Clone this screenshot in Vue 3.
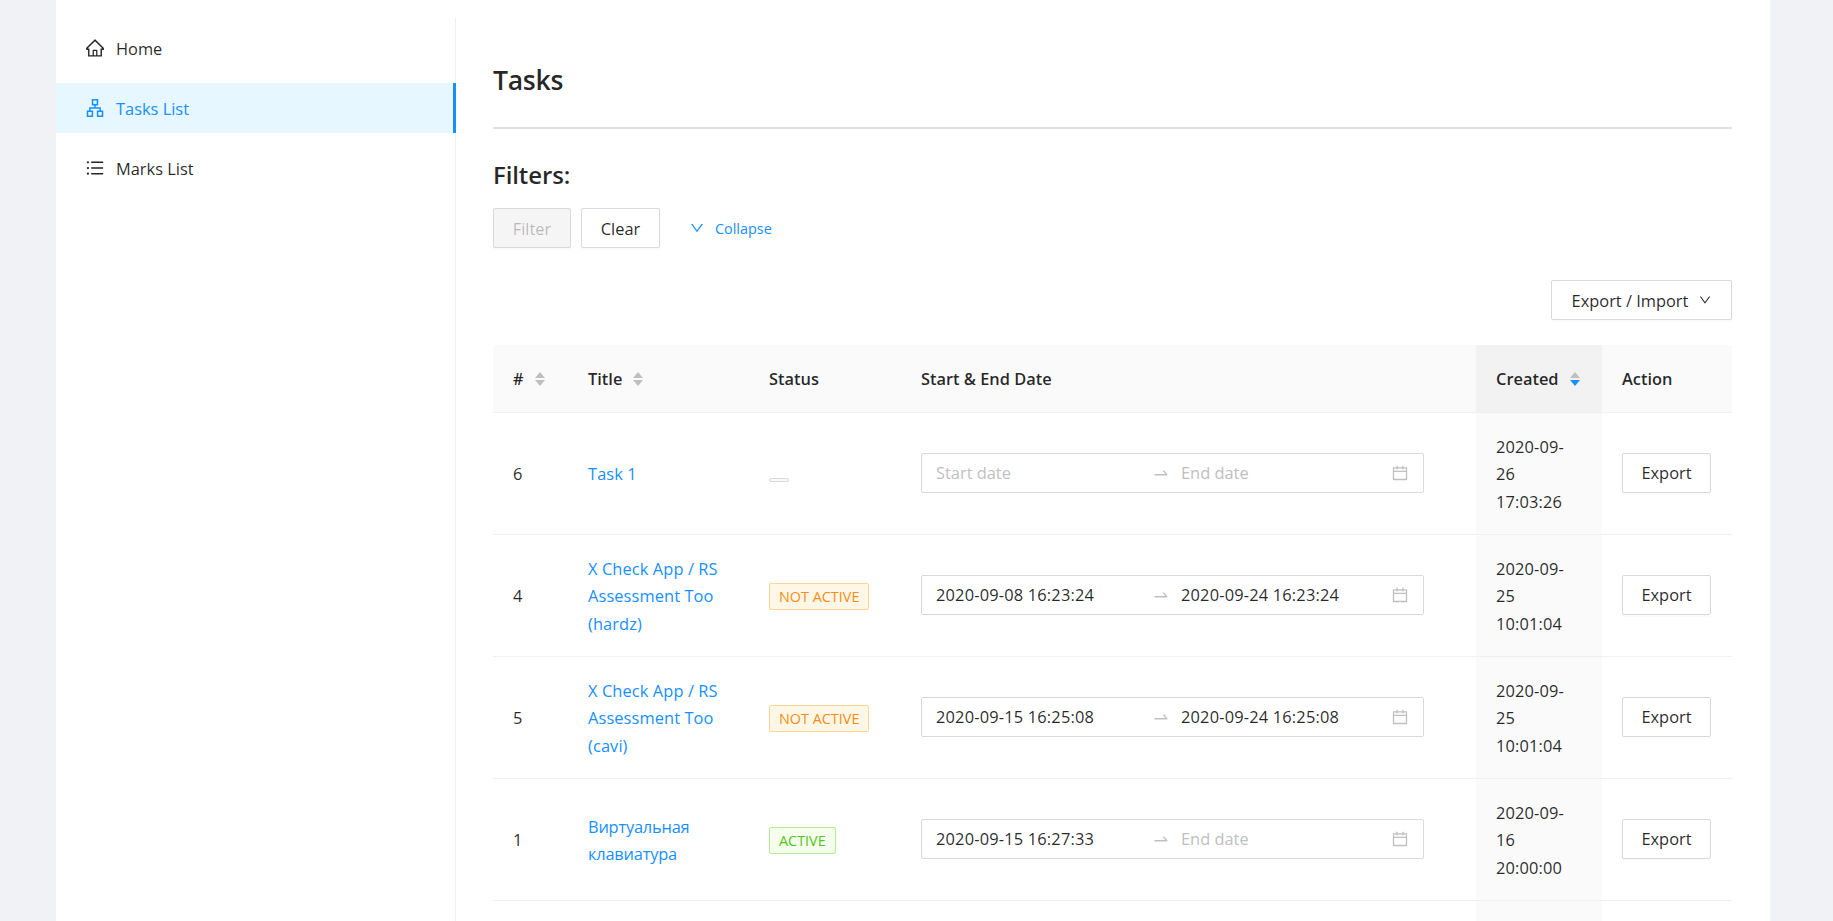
<script setup>
const paths = {
  down: 'M884 256h-75c-5.1 0-9.9 2.5-12.9 6.6L512 654.2 227.9 262.6c-3-4.1-7.8-6.6-12.9-6.6h-75c-6.5 0-10.3 7.4-6.5 12.7l352.6 486.1c12.8 17.6 39 17.6 51.7 0l352.6-486.1c3.9-5.3.1-12.7-6.4-12.7z',
  swap: 'M873.1 596.2l-164-208A32 32 0 0 0 684 376h-64.8c-6.7 0-10.4 7.7-6.3 13l144.3 183H152c-4.4 0-8 3.6-8 8v60c0 4.4 3.6 8 8 8h695.9c26.8 0 41.7-30.8 25.2-51.8z',
  cal: 'M880 184H712v-64c0-4.4-3.6-8-8-8h-56c-4.4 0-8 3.6-8 8v64H384v-64c0-4.4-3.6-8-8-8h-56c-4.4 0-8 3.6-8 8v64H144c-17.7 0-32 14.3-32 32v664c0 17.7 14.3 32 32 32h736c17.7 0 32-14.3 32-32V216c0-17.7-14.3-32-32-32zm-40 656H184V460h656v380zM184 392V256h128v48c0 4.4 3.6 8 8 8h56c4.4 0 8-3.6 8-8v-48h256v48c0 4.4 3.6 8 8 8h56c4.4 0 8-3.6 8-8v-48h128v136H184z'
}
const menu = [
  { label: 'Home', d: 'M946.5 505L560.1 118.8l-25.9-25.9a31.5 31.5 0 0 0-44.4 0L77.5 505a63.9 63.9 0 0 0-18.8 46c.4 35.2 29.7 63.3 64.9 63.3h42.5V940h691.8V614.3h43.4c17.1 0 33.2-6.7 45.3-18.8a63.6 63.6 0 0 0 18.7-45.3c0-17-6.7-33.1-18.8-45.2zM568 868H456V664h112v204zm217.9-325.7V868H632V640c0-22.1-17.9-40-40-40H432c-22.1 0-40 17.9-40 40v228H238.1V542.3h-96l370-369.7 23.1 23.1L882 542.3h-96.1z' },
  { label: 'Tasks List', active: true, d: 'M908 640H804V488c0-4.4-3.6-8-8-8H548v-96h108c8.8 0 16-7.2 16-16V80c0-8.8-7.2-16-16-16H368c-8.8 0-16 7.2-16 16v288c0 8.8 7.2 16 16 16h108v96H228c-4.4 0-8 3.6-8 8v152H116c-8.8 0-16 7.2-16 16v288c0 8.8 7.2 16 16 16h288c8.8 0 16-7.2 16-16V656c0-8.8-7.2-16-16-16H292v-88h440v88H620c-8.8 0-16 7.2-16 16v288c0 8.8 7.2 16 16 16h288c8.8 0 16-7.2 16-16V656c0-8.8-7.2-16-16-16zm-564 76v168H176V716h168zm84-408V140h168v168H428zm420 576H680V716h168v168z' },
  { label: 'Marks List', d: 'M912 192H328c-4.4 0-8 3.6-8 8v56c0 4.4 3.6 8 8 8h584c4.4 0 8-3.6 8-8v-56c0-4.4-3.6-8-8-8zm0 284H328c-4.4 0-8 3.6-8 8v56c0 4.4 3.6 8 8 8h584c4.4 0 8-3.6 8-8v-56c0-4.4-3.6-8-8-8zm0 284H328c-4.4 0-8 3.6-8 8v56c0 4.4 3.6 8 8 8h584c4.4 0 8-3.6 8-8v-56c0-4.4-3.6-8-8-8zM104 228a56 56 0 1 0 112 0 56 56 0 1 0-112 0zm0 284a56 56 0 1 0 112 0 56 56 0 1 0-112 0zm0 284a56 56 0 1 0 112 0 56 56 0 1 0-112 0z' }
]
const rows = [
  { id: 6, title: 'Task 1', status: '', start: '', end: '', created: ['2020-09-', '26', '17:03:26'] },
  { id: 4, title: 'X Check App / RS Assessment Too (hardz)', status: 'NOT ACTIVE', start: '2020-09-08 16:23:24', end: '2020-09-24 16:23:24', created: ['2020-09-', '25', '10:01:04'] },
  { id: 5, title: 'X Check App / RS Assessment Too (cavi)', status: 'NOT ACTIVE', start: '2020-09-15 16:25:08', end: '2020-09-24 16:25:08', created: ['2020-09-', '25', '10:01:04'] },
  { id: 1, title: 'Виртуальная клавиатура', status: 'ACTIVE', start: '2020-09-15 16:27:33', end: '', created: ['2020-09-', '16', '20:00:00'], cyr: true }
]
</script>

<template>
  <div class="page">
    <div class="shell">
      <aside class="side">
        <div v-for="m in menu" :key="m.label" class="item" :class="{ on: m.active }">
          <svg class="ico" viewBox="64 64 896 896" fill="currentColor"><path :d="m.d" /></svg>
          <span>{{ m.label }}</span>
        </div>
      </aside>
      <main class="main">
        <h1 class="title">Tasks</h1>
        <h2 class="sub">Filters:</h2>
        <div class="filters">
          <button class="btn dis">Filter</button>
          <button class="btn">Clear</button>
          <a class="collapse">
            <svg class="chev" viewBox="64 64 896 896" fill="currentColor"><path :d="paths.down" /></svg>
            <span>Collapse</span>
          </a>
        </div>
        <div class="tools">
          <button class="btn export">Export / Import
            <svg class="chev-s" viewBox="64 64 896 896" fill="currentColor"><path :d="paths.down" /></svg>
          </button>
        </div>
        <table class="tbl">
          <colgroup>
            <col class="c1"><col class="c2"><col class="c3"><col class="c4"><col class="c5"><col class="c6">
          </colgroup>
          <thead>
            <tr>
              <th><span class="th-in"># <span class="sort"><i class="up"></i><i class="dn"></i></span></span></th>
              <th><span class="th-in">Title <span class="sort"><i class="up"></i><i class="dn"></i></span></span></th>
              <th>Status</th>
              <th>Start &amp; End Date</th>
              <th class="sorted"><span class="th-in">Created <span class="sort"><i class="up"></i><i class="dn act"></i></span></span></th>
              <th>Action</th>
            </tr>
          </thead>
          <tbody>
            <tr v-for="r in rows" :key="r.id">
              <td>{{ r.id }}</td>
              <td><a class="link" :class="{ cyr: r.cyr }">{{ r.title }}</a></td>
              <td>
                <span v-if="r.status" class="tag" :class="r.status === 'ACTIVE' ? 'green' : 'orange'">{{ r.status }}</span>
                <span v-else class="tag-empty"></span>
              </td>
              <td>
                <div class="picker">
                  <span class="pi-start" :class="{ ph: !r.start }">{{ r.start || 'Start date' }}</span>
                  <svg class="swap" viewBox="64 64 896 896" fill="currentColor"><path :d="paths.swap" /></svg>
                  <span class="pi-end" :class="{ ph: !r.end }">{{ r.end || 'End date' }}</span>
                  <svg class="cal" viewBox="64 64 896 896" fill="currentColor"><path :d="paths.cal" /></svg>
                </div>
              </td>
              <td class="sorted-td"><div v-for="l in r.created" :key="l">{{ l }}</div></td>
              <td><button class="btn small">Export</button></td>
            </tr>
            <tr class="tail">
              <td></td><td></td><td></td><td></td><td class="sorted-td"></td><td></td>
            </tr>
          </tbody>
        </table>
      </main>
    </div>
  </div>
</template>

<style>
html, body { margin: 0; height: 100%; overflow: hidden; background: #f0f2f5; }
</style>

<style scoped>
.page {
  height: 921px;
  overflow: hidden;
  background: #f0f2f5;
  padding: 0 63px 0 56px;
  font-family: "Open Sans", "Noto Sans", sans-serif;
  font-size: 16.4px;
  color: rgba(0, 0, 0, 0.85);
}
.shell { display: flex; height: 100%; background: #fff; padding-top: 18px; box-sizing: border-box; }
.side { width: 400px; flex: none; border-right: 1px solid #f0f0f0; box-sizing: border-box; padding-top: 5px; display: flex; flex-direction: column; gap: 10px; }
.item { height: 50px; width: 400px; display: flex; align-items: center; padding-left: 30px; box-sizing: border-box; gap: 12px; color: rgba(0,0,0,.85); }
.item.on { background: #e6f7ff; color: #1890ff; border-right: 3px solid #1890ff; }
.ico { width: 18px; height: 18px; flex: none; }
.main { flex: 1; min-width: 0; padding: 0 38px 0 37px; }
.title { margin: 0; font-size: 26.6px; font-weight: 600; line-height: 38px; padding: 43px 0 28px; letter-spacing: -0.3px; border-bottom: 2px solid #e0e0e0; height: 38px; box-sizing: content-box; color: rgba(0,0,0,.85); }
.sub { margin: 31px 0 18px; font-size: 24px; font-weight: 600; line-height: 30px; letter-spacing: -0.1px; color: rgba(0,0,0,.85); }
.filters { display: flex; align-items: center; height: 40px; }
.btn { height: 40px; padding: 0 19px; border: 1px solid #d9d9d9; border-radius: 2px; background: #fff; font: inherit; color: rgba(0,0,0,.85); box-shadow: 0 2px 0 rgba(0,0,0,.015); box-sizing: border-box; }
.btn.dis { background: #f5f5f5; color: rgba(0,0,0,.25); width: 78px; padding: 0; }
.filters .btn + .btn { margin-left: 10px; width: 79px; padding: 0; }
.collapse { display: flex; align-items: center; margin-left: 30px; color: #1890ff; font-size: 14.4px; }
.chev { width: 14px; height: 14px; margin-right: 11px; }
.tools { display: flex; justify-content: flex-end; margin-top: 32px; }
.export { width: 181px; padding: 0; display: flex; align-items: center; justify-content: center; gap: 11px; }
.chev-s { width: 12px; height: 12px; }
.tbl { width: 1239px; table-layout: fixed; border-collapse: separate; border-spacing: 0; margin-top: 25px; }
.c1 { width: 75px; } .c2 { width: 181px; } .c3 { width: 152px; } .c4 { width: 575px; } .c5 { width: 126px; } .c6 { width: 130px; }
th { height: 68px; box-sizing: border-box; padding: 0 20px; background: #fafafa; text-align: left; font-weight: 600; border-bottom: 1px solid #f0f0f0; }
th.sorted { background: #f2f2f2; }
.th-in { display: inline-flex; align-items: center; gap: 11px; }
.sort { display: inline-flex; flex-direction: column; gap: 2px; }
.sort i { display: block; width: 0; height: 0; border-left: 5.5px solid transparent; border-right: 5.5px solid transparent; }
.sort .up { border-bottom: 6px solid #bfbfbf; }
.sort .dn { border-top: 6px solid #bfbfbf; }
.sort .dn.act { border-top-color: #1890ff; }
td { padding: 20px 20px 19px; border-bottom: 1px solid #f0f0f0; line-height: 27.33px; vertical-align: middle; height: 122px; box-sizing: border-box; }
.tail td { border-bottom: 0; }
.sorted-td { background: #fafafa; letter-spacing: 0.15px; }
.link { color: #1890ff; letter-spacing: 0.1px; }
.link.cyr { letter-spacing: -0.2px; }
.tag { display: inline-block; height: 27px; line-height: 25px; padding: 0 9px; border: 1px solid; border-radius: 2px; font-size: 14.4px; box-sizing: border-box; vertical-align: middle; position: relative; top: -1px; }
.tag.orange { color: #fa8c16; background: #fff7e6; border-color: #ffd591; }
.tag.green { color: #52c41a; background: #f6ffed; border-color: #b7eb8f; }
.tag-empty { display: block; width: 20px; height: 4px; background: #fafafa; border: 1px solid #d9d9d9; border-radius: 2px; box-sizing: border-box; margin-top: 11px; }
.picker { width: 503px; height: 40px; border: 1px solid #d9d9d9; border-radius: 2px; box-sizing: border-box; display: flex; align-items: center; padding: 0 15px 0 14px; margin-top: -3px; }
.pi-start { width: 217px; flex: none; letter-spacing: 0.18px; }
.pi-end { flex: 1; letter-spacing: 0.18px; }
.ph { color: #bfbfbf; letter-spacing: 0; }
.swap { width: 16px; height: 16px; flex: none; margin-right: 12px; color: #bfbfbf; }
.cal { width: 16px; height: 16px; flex: none; color: #bfbfbf; }
.small { width: 89px; padding: 0; display: block; margin-top: -3px; }
</style>
